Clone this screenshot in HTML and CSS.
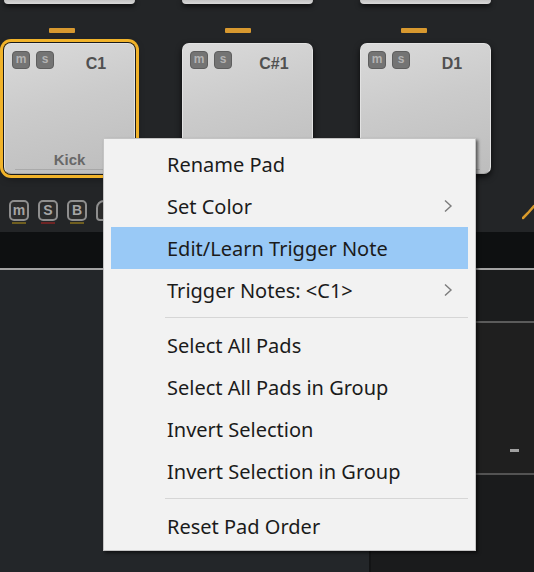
FILE: index.html
```html
<!DOCTYPE html>
<html lang="en">
<head>
  <meta charset="UTF-8">
  <meta name="viewport" content="width=device-width, initial-scale=1.0">
  <title>Pads</title>
  <link rel="stylesheet" href="styles.css">
</head>
<body>

  <!-- Pad rack -->
  <div class="rack">
    <div class="pad-grid prev-row">
      <div class="pad-stub"></div>
      <div class="pad-stub"></div>
      <div class="pad-stub"></div>
    </div>

    <div class="bars">
      <span class="bar"></span>
      <span class="bar"></span>
      <span class="bar"></span>
    </div>

    <div class="pad-grid">
      <div class="pad selected">
        <div class="pad-top">
          <span class="mini">m</span>
          <span class="mini">s</span>
          <span class="note">C1</span>
        </div>
        <div class="pad-name">Kick</div>
      </div>
      <div class="pad">
        <div class="pad-top">
          <span class="mini">m</span>
          <span class="mini">s</span>
          <span class="note">C#1</span>
        </div>
        <div class="pad-name"></div>
      </div>
      <div class="pad">
        <div class="pad-top">
          <span class="mini">m</span>
          <span class="mini">s</span>
          <span class="note">D1</span>
        </div>
        <div class="pad-name"></div>
      </div>
    </div>

    <!-- Group buttons -->
    <div class="group-tools">
      <span class="tool yellow">m</span>
      <span class="tool red">S</span>
      <span class="tool yellow">B</span>
      <span class="tool lock"></span>
      <svg class="knob" width="12" height="16" viewBox="0 0 12 16">
        <path d="M1 14 L6 9 L12 2" fill="none" stroke="#d99a2b" stroke-width="2.5" stroke-linecap="round"/>
      </svg>
    </div>
    <div class="band"></div>
  </div>

  <!-- Lower panels -->
  <div class="lower">
    <div class="lower-left"></div>
    <div class="lower-right">
      <div class="strip"></div>
      <div class="box"><span class="dash"></span></div>
      <div class="rest"></div>
    </div>
  </div>

  <!-- Context menu -->
  <ul class="menu">
    <li class="item">Rename Pad</li>
    <li class="item">Set Color
      <svg class="chev" width="10" height="14" viewBox="0 0 10 14"><path d="M2 1.5 L8 7 L2 12.5" fill="none" stroke="#7c7c7c" stroke-width="1.4"/></svg>
    </li>
    <li class="item active">Edit/Learn Trigger Note</li>
    <li class="item">Trigger Notes: &lt;C1&gt;
      <svg class="chev" width="10" height="14" viewBox="0 0 10 14"><path d="M2 1.5 L8 7 L2 12.5" fill="none" stroke="#7c7c7c" stroke-width="1.4"/></svg>
    </li>
    <li class="sep"></li>
    <li class="item">Select All Pads</li>
    <li class="item">Select All Pads in Group</li>
    <li class="item">Invert Selection</li>
    <li class="item">Invert Selection in Group</li>
    <li class="sep"></li>
    <li class="item">Reset Pad Order</li>
  </ul>

</body>
</html>
```

FILE: styles.css
```css
body {
  margin: 0;
  padding: 0;
  width: 534px;
  height: 572px;
  overflow: hidden;
  background: #232527;
  font-family: 'Liberation Sans', Arial, sans-serif;
  position: relative;
}

/* ---- pads ---- */

.pad-grid {
  display: grid;
  grid-template-columns: repeat(3, 131px);
  column-gap: 47px;
  padding-left: 4px;
}

.prev-row {
  height: 4px;
}

.pad-stub {
  height: 4px;
  background: linear-gradient(#c4c4c4, #d8d8d8);
  border-radius: 0 0 7px 7px;
  box-shadow: 0 2px 5px rgba(0, 0, 0, 0.8);
}

.bars {
  display: flex;
  gap: 150px;
  padding-left: 49px;
  margin-top: 24px;
  height: 5px;
}

.bar {
  width: 26px;
  height: 5px;
  background: #d8992f;
  border-radius: 1px;
}

.pad-grid + .bars + .pad-grid {
  margin-top: 10px;
}

.pad {
  height: 131px;
  box-sizing: border-box;
  display: flex;
  flex-direction: column;
  justify-content: space-between;
  padding: 7px 0 3px;
  background: linear-gradient(165deg, #dadada 0%, #cbcbcb 45%, #bdbdbd 100%);
  border: 1px solid #e2e2e2;
  border-bottom-color: #a8a8a8;
  border-radius: 7px;
  box-shadow: 0 3px 6px rgba(0, 0, 0, 0.75);
}

.pad.selected {
  box-shadow: 0 0 0 1px #1b1b1b, 0 0 0 4px #f1b32a, 0 3px 8px rgba(0, 0, 0, 0.6);
}

.pad-top {
  display: flex;
  align-items: flex-start;
  gap: 6px;
  padding-left: 7px;
}

.mini {
  width: 18px;
  height: 18px;
  box-sizing: border-box;
  background: #747474;
  border: 1px solid #5e5e5e;
  border-radius: 4px;
  color: #b3b3b3;
  font-size: 12px;
  font-weight: bold;
  line-height: 15px;
  text-align: center;
}

.note {
  flex: 1;
  text-align: center;
  font-size: 16px;
  font-weight: bold;
  color: #505050;
  padding: 4px 2px 0 0;
}

.pad-name {
  height: 18px;
  margin: 0 10px;
  border-bottom: 1px solid rgba(0, 0, 0, 0.12);
  text-align: center;
  font-size: 15px;
  font-weight: bold;
  color: #686868;
  line-height: 18px;
}

/* ---- group tools ---- */

.group-tools {
  display: flex;
  align-items: flex-start;
  gap: 9px;
  padding-left: 9px;
  margin-top: 26px;
  height: 32px;
}

.tool {
  width: 20px;
  height: 21px;
  box-sizing: border-box;
  border: 2px solid #8e8e8e;
  border-radius: 5px;
  background: #2c2c2c;
  color: #a5a5a5;
  font-size: 14px;
  font-weight: bold;
  line-height: 17px;
  text-align: center;
  position: relative;
}

.tool::after {
  content: '';
  position: absolute;
  left: 1px;
  right: 1px;
  bottom: -5px;
  height: 2px;
}

.tool.yellow::after {
  background: #6f5e1f;
}

.tool.red::after {
  background: #6d2424;
}

.tool.lock {
  border-radius: 8px 8px 4px 4px;
}

.knob {
  margin-left: auto;
  margin-top: 4px;
}

.band {
  height: 36px;
  background: #0e1011;
  border-bottom: 2px solid #a3a3a3;
}

/* ---- lower panels ---- */

.lower {
  display: flex;
  height: 302px;
}

.lower-left {
  width: 369px;
  background: #232629;
}

.lower-right {
  flex: 1;
  display: flex;
  flex-direction: column;
  background: #1a1b1c;
  border-left: 2px solid #131415;
}

.strip {
  height: 51px;
  background: #1b1c1d;
  border-bottom: 2px solid #5b5b5b;
}

.box {
  height: 150px;
  background: #1f1f1f;
  border-bottom: 2px solid #535353;
  position: relative;
}

.dash {
  position: absolute;
  left: 139px;
  top: 126px;
  width: 9px;
  height: 3px;
  background: #a0a0a0;
}

.rest {
  flex: 1;
}

/* ---- context menu ---- */

.menu {
  position: absolute;
  left: 103px;
  top: 138px;
  width: 373px;
  height: 413px;
  box-sizing: border-box;
  margin: 0;
  padding: 4px 7px 3px;
  list-style: none;
  background: #f2f2f2;
  border: 1px solid #c4c4c4;
  box-shadow: 2px 2px 3px rgba(0, 0, 0, 0.55);
  font-family: 'Noto Sans', 'Open Sans', sans-serif;
  font-size: 20px;
  color: #1b1b1b;
}

.item {
  height: 42px;
  display: flex;
  align-items: center;
  padding-left: 56px;
  padding-right: 15px;
}

.item.active {
  background: #99c9f6;
}

.chev {
  margin-left: auto;
}

.sep {
  height: 13px;
  display: flex;
  align-items: center;
  padding-left: 54px;
}

.sep::before {
  content: '';
  flex: 1;
  height: 1px;
  background: #d6d6d6;
}
```
